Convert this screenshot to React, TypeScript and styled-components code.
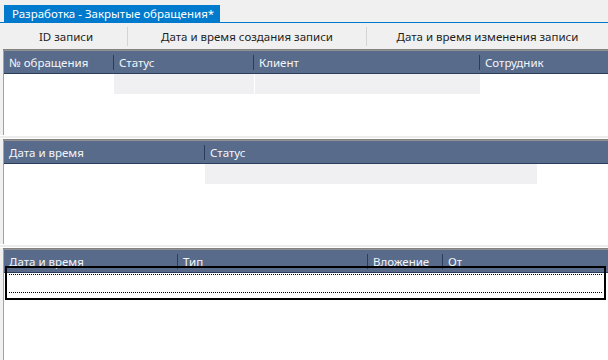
import React from "react";
import styled, { createGlobalStyle } from "styled-components";

const GlobalStyle = createGlobalStyle`
  html, body {
    margin: 0;
    padding: 0;
    background: #f0f0f0;
  }
  body {
    font-family: "Noto Sans", "Open Sans", sans-serif;
    font-size: 11.5px;
    overflow: hidden;
  }
`;

const Screen = styled.div`
  width: 608px;
  height: 360px;
  display: flex;
  flex-direction: column;
  overflow: hidden;
`;

const TabStrip = styled.div`
  display: flex;
  height: 22px;
  padding-left: 4px;
  align-items: flex-end;
  border-bottom: 1px solid #007acc;
`;

const Tab = styled.div`
  height: 17px;
  line-height: 17px;
  padding: 0 6px 0 8px;
  background: #007acc;
  color: #ffffff;
  white-space: nowrap;
`;

const ColumnBar = styled.div`
  display: flex;
  height: 26px;
  padding-left: 5px;
  align-items: center;
  background: #f0f0f0;
  color: #1e1e1e;
`;

const BarItem = styled.div<{ $w?: number }>`
  ${(p) => (p.$w ? `width: ${p.$w}px;` : "flex: 1;")}
  text-align: center;
  white-space: nowrap;
`;

const BarSep = styled.div`
  width: 1px;
  height: 19px;
  background: #d4d4d4;
`;

const Body = styled.div`
  flex: 1;
  display: flex;
  flex-direction: column;
  padding-left: 3px;
  background: #f0f0f0;
`;

const Panel = styled.div<{ $h?: number }>`
  position: relative;
  display: flex;
  flex-direction: column;
  ${(p) => (p.$h ? `height: ${p.$h}px;` : "flex: 1;")}
  border-left: 1px solid #a3a3a3;
  background: #ffffff;
`;

const PanelTop = styled.div`
  height: 2px;
  background: linear-gradient(#7a7a7a, #9a9a9a);
  margin-left: -1px;
`;

const Header = styled.div`
  display: flex;
  height: 22px;
  background: #586b8b;
  border-bottom: 1px solid #2b3d5c;
  color: #f4f6fa;
`;

const HeadCell = styled.div<{ $w?: number }>`
  ${(p) => (p.$w ? `width: ${p.$w}px;` : "flex: 1;")}
  display: flex;
  align-items: center;
  padding-left: 5px;
  box-sizing: border-box;
  white-space: nowrap;
  overflow: hidden;
`;

const HeadSep = styled.div`
  width: 1px;
  margin: 4px 0 3px;
  background: #2c3d5b;
`;

const Row = styled.div`
  display: flex;
  height: 20px;
`;

const Cell = styled.div<{ $w?: number; $filled?: boolean }>`
  ${(p) => (p.$w ? `width: ${p.$w}px;` : "flex: 1;")}
  background: ${(p) => (p.$filled ? "#f0f0f2" : "#ffffff")};
  border-right: 1px solid #ffffff;
`;

const Splitter = styled.div`
  height: 4px;
  margin-left: -4px;
  background: linear-gradient(#ffffff 0 1px, #ececec 1px 3px, #ffffff 3px 4px);
`;

const FocusFrame = styled.div`
  position: absolute;
  left: 1px;
  top: 18px;
  width: 601px;
  height: 34px;
  box-sizing: border-box;
  border: 2px solid #000000;
  padding: 6px 2px 0;
`;

const NewRow = styled.div`
  height: 19px;
  box-sizing: border-box;
  border-top: 1px dotted #000000;
  border-bottom: 1px dotted #000000;
`;

export default function App() {
  return (
    <Screen>
      <GlobalStyle />
      <TabStrip>
        <Tab>Разработка - Закрытые обращения*</Tab>
      </TabStrip>
      <ColumnBar>
        <BarItem $w={122}>ID записи</BarItem>
        <BarSep />
        <BarItem $w={238}>Дата и время создания записи</BarItem>
        <BarSep />
        <BarItem>Дата и время изменения записи</BarItem>
      </ColumnBar>
      <Body>
        <Panel $h={86}>
          <PanelTop />
          <Header>
            <HeadCell $w={109}>№ обращения</HeadCell>
            <HeadSep />
            <HeadCell $w={139}>Статус</HeadCell>
            <HeadSep />
            <HeadCell $w={225}>Клиент</HeadCell>
            <HeadSep />
            <HeadCell>Сотрудник</HeadCell>
          </Header>
          <Row>
            <Cell $w={109} />
            <Cell $w={140} $filled />
            <Cell $w={225} $filled />
            <Cell />
          </Row>
        </Panel>
        <Splitter />
        <Panel $h={105}>
          <PanelTop />
          <Header>
            <HeadCell $w={200}>Дата и время</HeadCell>
            <HeadSep />
            <HeadCell>Статус</HeadCell>
          </Header>
          <Row>
            <Cell $w={200} />
            <Cell $w={332} $filled />
            <Cell />
          </Row>
        </Panel>
        <Splitter />
        <Panel>
          <PanelTop />
          <Header>
            <HeadCell $w={173}>Дата и время</HeadCell>
            <HeadSep />
            <HeadCell $w={189}>Тип</HeadCell>
            <HeadSep />
            <HeadCell $w={74}>Вложение</HeadCell>
            <HeadSep />
            <HeadCell>От</HeadCell>
          </Header>
          <FocusFrame>
            <NewRow />
          </FocusFrame>
        </Panel>
      </Body>
    </Screen>
  );
}
